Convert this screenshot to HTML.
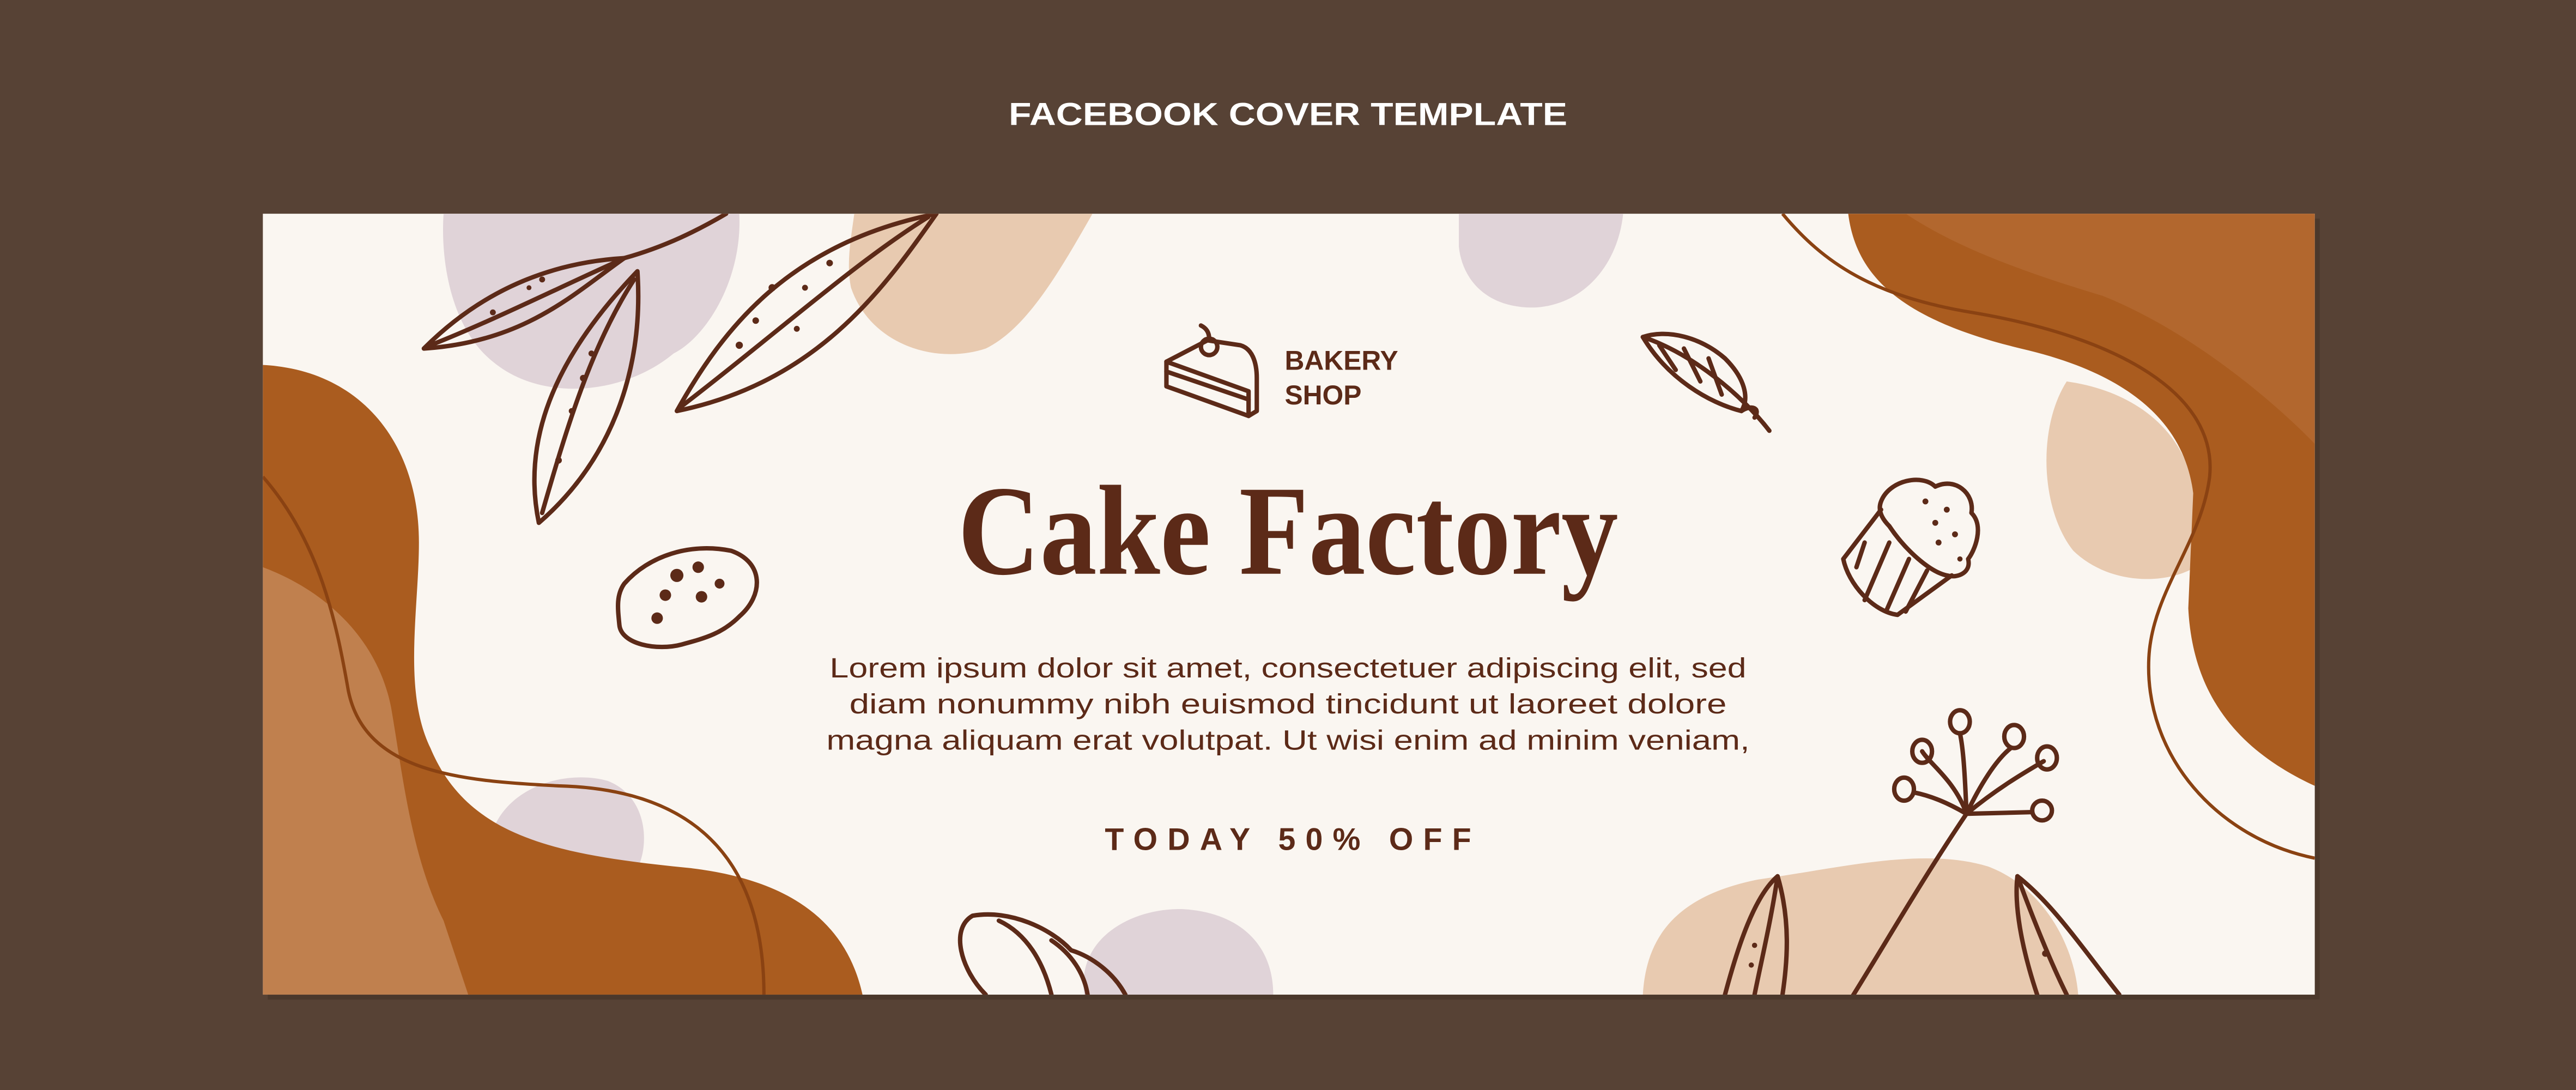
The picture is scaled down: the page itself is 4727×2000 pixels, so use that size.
<!DOCTYPE html>
<html><head><meta charset="utf-8"><style>
html,body{margin:0;padding:0;background:#574235;}
svg{display:block}
</style></head><body>
<svg width="4727" height="2000" viewBox="0 0 1568 663" preserveAspectRatio="none" xmlns="http://www.w3.org/2000/svg">
<rect width="1568" height="663" fill="#574235"/>
<text x="784" y="76" text-anchor="middle" font-family="Liberation Sans, sans-serif" font-weight="bold" font-size="19.5" fill="#ffffff" textLength="340" lengthAdjust="spacingAndGlyphs">FACEBOOK COVER TEMPLATE</text>
<rect x="163" y="133" width="1249" height="475" fill="#3f2d22" opacity="0.5"/>
<defs><clipPath id="c"><rect x="160" y="130" width="1249" height="475"/></clipPath></defs>
<rect x="160" y="130" width="1249" height="475" fill="#faf6f1"/>
<g clip-path="url(#c)">
<path d="M270,130 L450,130 C452,170 430,205 410,215 C380,240 330,245 300,220 C275,200 268,160 270,130Z" fill="#e0d3d8"/>
<path d="M520,130 L665,130 C645,165 625,200 600,212 C570,222 530,210 518,175 C515,160 518,145 520,130Z" fill="#e8cab0"/>
<path d="M888,130 L988,130 C985,160 965,185 935,187 C905,188 890,170 888,150Z" fill="#e0d3d8"/>
<path d="M1000,605 C1002,570 1020,545 1070,535 C1120,528 1170,515 1210,527 C1240,538 1262,570 1265,605Z" fill="#e8cab0"/>
<path d="M660,605 C655,570 690,552 720,553 C755,555 775,575 775,605Z" fill="#e0d3d8"/>
<path d="M300,505 C310,478 345,468 370,475 C395,485 395,515 388,528 C360,522 330,515 300,505Z" fill="#e0d3d8"/>
<path d="M160,222 C220,225 255,270 255,330 C255,370 245,420 262,455 C285,510 340,520 420,528 C480,535 515,560 525,605 L160,605Z" fill="#aa5c1f"/>
<path d="M160,345 C200,360 230,390 238,430 C245,470 250,520 270,560 L285,605 L160,605Z" fill="#c0804e"/>
<path d="M160,290 C195,330 205,380 212,420 C222,470 280,475 340,478 C420,480 465,520 465,605" fill="none" stroke="#8a4212" stroke-width="2"/>
<path d="M1258,232 C1240,260 1242,310 1262,335 C1285,357 1320,355 1336,345 L1336,300 C1330,262 1300,238 1258,232Z" fill="#e8cab0"/>
<path d="M1125,130 C1130,170 1160,195 1230,212 C1300,228 1330,260 1335,300 L1332,370 C1335,430 1370,460 1409,478 L1409,130 Z" fill="#aa5c1f"/>
<path d="M1160,130 L1409,130 L1409,270 C1380,240 1330,200 1280,180 C1230,165 1190,150 1160,130Z" fill="#b56c34" opacity="0.7"/>
<path d="M1085,130 C1110,160 1140,180 1200,190 C1290,205 1350,240 1345,290 C1340,330 1310,360 1308,400 C1305,460 1350,510 1409,522" fill="none" stroke="#8a4212" stroke-width="2"/>
<g fill="none" stroke="#5c2a18" stroke-width="2.7" stroke-linecap="round" stroke-linejoin="round">
<path d="M380,157 C405,150 425,140 442,130"/>
<path d="M258,212 C290,180 330,160 380,157 C350,178 320,208 258,212Z"/>
<path d="M262,210 C300,195 340,175 378,158"/>
<path d="M328,318 C318,270 335,220 388,165 C392,225 372,280 328,318Z"/>
<path d="M330,312 C345,260 360,210 386,170"/>
<path d="M412,250 C440,200 480,148 570,130 C540,172 500,232 412,250Z"/>
<path d="M415,247 C470,205 520,160 565,132"/>
<path d="M380,355 C395,338 420,330 445,335 C465,342 465,362 450,375 C440,385 430,388 415,392 C400,396 378,392 377,380 C376,370 375,362 380,355Z"/>
<path d="M600,605 C585,590 578,565 592,557 C615,553 640,565 652,578 C665,582 678,592 685,605"/>
<path d="M608,560 C625,568 635,585 640,605"/>
<path d="M640,572 C652,580 660,592 662,605"/>
<path d="M1000,205 C1030,215 1060,240 1077,262"/>
<path d="M1000,205 C1015,200 1035,205 1050,218 C1062,230 1065,242 1060,250 C1040,245 1015,230 1000,205Z"/>
<path d="M1010,210 L1020,225 M1025,212 L1035,232 M1040,218 L1048,240"/>
<path d="M1060,250 C1066,246 1072,248 1068,254"/>
<path d="M1145,305 C1150,292 1170,288 1178,296 C1190,290 1202,300 1200,312 C1208,320 1202,335 1198,340 C1200,348 1192,352 1185,350 C1175,348 1160,335 1150,320 C1145,315 1143,310 1145,305Z"/>
<path d="M1145,310 L1122,340 C1125,355 1140,372 1155,374 L1188,350"/>
<path d="M1135,330 L1130,345"/><path d="M1150,330 L1135,365"/><path d="M1162,340 L1148,372"/><path d="M1173,347 L1160,372"/>
<path d="M1127,607 C1150,570 1170,535 1197,495"/>
<path d="M1197,495 C1190,475 1175,465 1170,457"/>
<path d="M1197,495 C1196,470 1195,455 1193,446"/>
<path d="M1197,495 C1205,478 1215,462 1224,455"/>
<path d="M1197,495 C1215,480 1232,470 1244,463"/>
<path d="M1197,495 L1236,494"/>
<path d="M1197,495 C1185,488 1175,484 1165,482"/>
<ellipse cx="1159" cy="480" rx="6" ry="7"/>
<ellipse cx="1170" cy="457" rx="6" ry="7"/>
<ellipse cx="1193" cy="439" rx="6" ry="7"/>
<ellipse cx="1226" cy="448" rx="6" ry="7"/>
<ellipse cx="1246" cy="461" rx="6" ry="7"/>
<ellipse cx="1243" cy="493" rx="6" ry="6"/>
<path d="M1050,605 C1058,575 1068,545 1082,533 C1090,560 1088,585 1085,605"/>
<path d="M1082,533 C1078,560 1072,585 1068,605"/>
<path d="M1240,605 C1230,575 1226,550 1228,533 C1250,550 1270,580 1290,605"/>
<path d="M1228,533 C1238,560 1248,585 1258,605"/>
<path d="M710,220 L735,207 L755,210 C762,212 765,220 765,230 L765,250 L760,253 L710,235 Z"/>
<path d="M710,226 L760,243"/><path d="M710,220 L760,238 L760,253"/>
<circle cx="736" cy="211" r="5"/><path d="M736,206 C736,201 733,199 731,198"/>
</g>
<g fill="#5c2a18">
<circle cx="330" cy="170" r="1.8"/><circle cx="322" cy="175" r="1.5"/><circle cx="300" cy="190" r="1.8"/>
<circle cx="355" cy="230" r="2"/><circle cx="348" cy="250" r="1.8"/><circle cx="360" cy="215" r="1.8"/><circle cx="340" cy="280" r="2"/>
<circle cx="470" cy="175" r="2.2"/><circle cx="460" cy="195" r="2"/><circle cx="450" cy="210" r="2.2"/><circle cx="490" cy="175" r="1.8"/><circle cx="505" cy="160" r="2"/><circle cx="485" cy="200" r="1.8"/>
<circle cx="412" cy="350" r="4"/><circle cx="425" cy="345" r="3.5"/><circle cx="405" cy="362" r="3.5"/><circle cx="427" cy="363" r="3.5"/><circle cx="438" cy="355" r="3"/><circle cx="400" cy="376" r="3.5"/>
<circle cx="1172" cy="305" r="1.8"/><circle cx="1185" cy="310" r="1.8"/><circle cx="1178" cy="318" r="1.8"/><circle cx="1190" cy="325" r="1.8"/><circle cx="1180" cy="330" r="1.8"/><circle cx="1193" cy="340" r="1.6"/>
<circle cx="1068" cy="575" r="1.6"/><circle cx="1066" cy="587" r="1.6"/><circle cx="1245" cy="580" r="2"/>
</g>
</g>
<g fill="#5c2a18" font-family="Liberation Sans, sans-serif">
<text x="782" y="225" font-weight="bold" font-size="16.5">BAKERY</text>
<text x="782" y="246" font-weight="bold" font-size="16.5">SHOP</text>
<text x="784" y="349" text-anchor="middle" font-family="Liberation Serif, serif" font-weight="bold" font-size="78" textLength="402" lengthAdjust="spacingAndGlyphs">Cake Factory</text>
<text x="784" y="412" text-anchor="middle" font-size="17" textLength="558" lengthAdjust="spacingAndGlyphs">Lorem ipsum dolor sit amet, consectetuer adipiscing elit, sed</text>
<text x="784" y="434" text-anchor="middle" font-size="17" textLength="534" lengthAdjust="spacingAndGlyphs">diam nonummy nibh euismod tincidunt ut laoreet dolore</text>
<text x="784" y="456" text-anchor="middle" font-size="17" textLength="562" lengthAdjust="spacingAndGlyphs">magna aliquam erat volutpat. Ut wisi enim ad minim veniam,</text>
<text x="784" y="517" text-anchor="middle" font-weight="bold" font-size="19" textLength="223" lengthAdjust="spacing">TODAY 50% OFF</text>
</g>
</svg>
</body></html>
